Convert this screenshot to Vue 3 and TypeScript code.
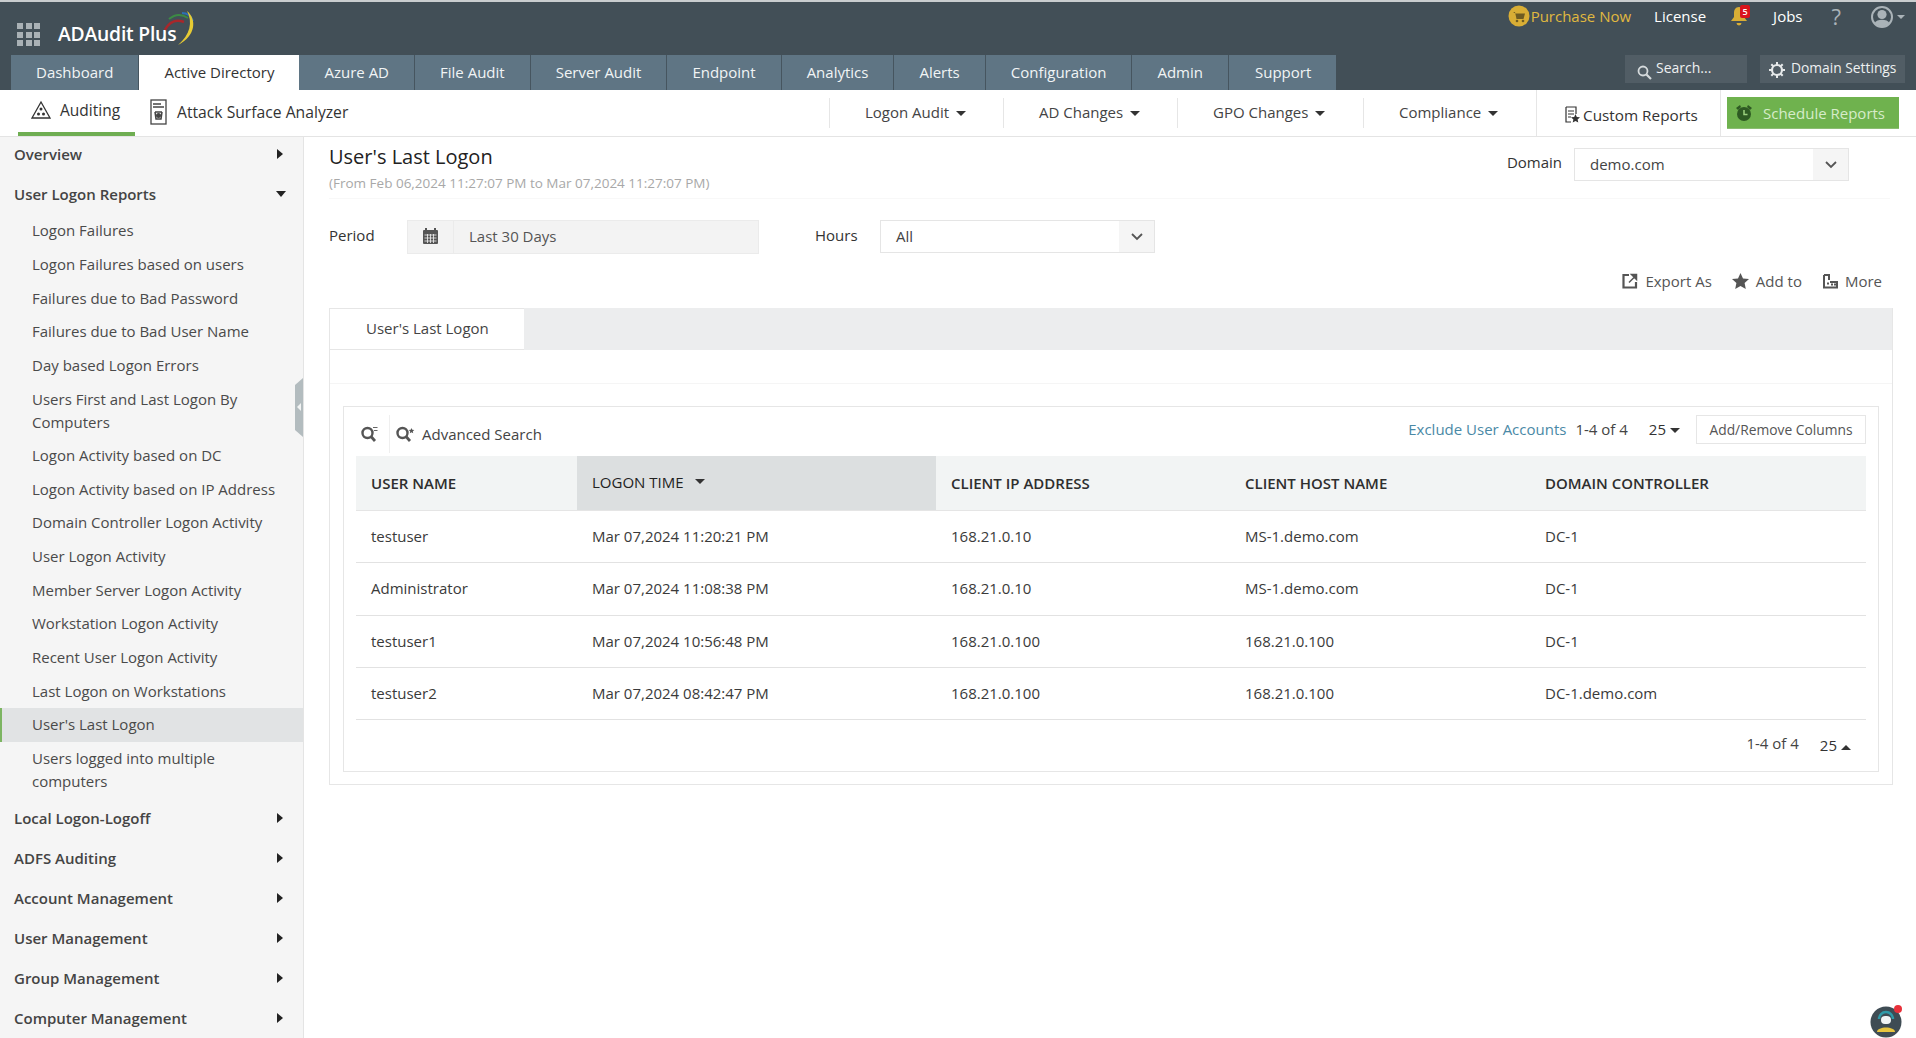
<script setup lang="ts">
interface NavItem { label: string; kind: 'head' | 'sub'; open?: boolean; active?: boolean }
const tabs: string[] = ['Dashboard', 'Active Directory', 'Azure AD', 'File Audit', 'Server Audit', 'Endpoint', 'Analytics', 'Alerts', 'Configuration', 'Admin', 'Support']
const menus: string[] = ['Logon Audit', 'AD Changes', 'GPO Changes', 'Compliance']
const nav: NavItem[] = [
  { label: 'Overview', kind: 'head' },
  { label: 'User Logon Reports', kind: 'head', open: true },
  { label: 'Logon Failures', kind: 'sub' },
  { label: 'Logon Failures based on users', kind: 'sub' },
  { label: 'Failures due to Bad Password', kind: 'sub' },
  { label: 'Failures due to Bad User Name', kind: 'sub' },
  { label: 'Day based Logon Errors', kind: 'sub' },
  { label: 'Users First and Last Logon By Computers', kind: 'sub' },
  { label: 'Logon Activity based on DC', kind: 'sub' },
  { label: 'Logon Activity based on IP Address', kind: 'sub' },
  { label: 'Domain Controller Logon Activity', kind: 'sub' },
  { label: 'User Logon Activity', kind: 'sub' },
  { label: 'Member Server Logon Activity', kind: 'sub' },
  { label: 'Workstation Logon Activity', kind: 'sub' },
  { label: 'Recent User Logon Activity', kind: 'sub' },
  { label: 'Last Logon on Workstations', kind: 'sub' },
  { label: "User's Last Logon", kind: 'sub', active: true },
  { label: 'Users logged into multiple computers', kind: 'sub' },
  { label: 'Local Logon-Logoff', kind: 'head' },
  { label: 'ADFS Auditing', kind: 'head' },
  { label: 'Account Management', kind: 'head' },
  { label: 'User Management', kind: 'head' },
  { label: 'Group Management', kind: 'head' },
  { label: 'Computer Management', kind: 'head' },
]
const rows: string[][] = [
  ['testuser', 'Mar 07,2024 11:20:21 PM', '168.21.0.10', 'MS-1.demo.com', 'DC-1'],
  ['Administrator', 'Mar 07,2024 11:08:38 PM', '168.21.0.10', 'MS-1.demo.com', 'DC-1'],
  ['testuser1', 'Mar 07,2024 10:56:48 PM', '168.21.0.100', '168.21.0.100', 'DC-1'],
  ['testuser2', 'Mar 07,2024 08:42:47 PM', '168.21.0.100', '168.21.0.100', 'DC-1.demo.com'],
]
</script>

<template>
  <div class="page">
    <header class="topbar">
      <div class="top-row">
        <div class="brand">
          <div class="apps"><i v-for="n in 9" :key="n"></i></div>
          <span class="logo-text">ADAudit Plus</span>
          <svg class="logo-arc" width="40" height="36" viewBox="0 0 40 36">
            <path d="M1 20 C5 12 12 9 20 12" fill="none" stroke="#a8272b" stroke-width="2.6" />
            <path d="M5 9 C11 4 18 4 24 8" fill="none" stroke="#3c8a44" stroke-width="2" />
            <path d="M18 3 C23 3 27 6 29 11" fill="none" stroke="#2c6fb5" stroke-width="2" />
            <path d="M23 1 C33 9 32 26 14 35 C26 25 29 12 23 1 Z" fill="#e6cb34" />
          </svg>
        </div>
        <div class="top-links">
          <span class="purchase">
            <svg width="22" height="22" viewBox="0 0 22 22"><circle cx="11" cy="11" r="10.5" fill="#d9ae35" /><path d="M5 7h2l1.5 7h7l1.5-5.5H7.5" fill="#6f5c22" /><circle cx="9" cy="16" r="1.3" fill="#6f5c22" /><circle cx="15" cy="16" r="1.3" fill="#6f5c22" /></svg>
            <span>Purchase Now</span>
          </span>
          <span class="link license">License</span>
          <span class="bell">
            <svg width="18" height="22" viewBox="0 0 18 22"><path d="M9 2c3.500 0 5 3 5 6v4l3 4H1l3-4V8c0-3 1.500-6 5-6z" fill="#d9ae35" /><path d="M6.500 18h5a2.500 2.500 0 0 1-5 0z" fill="#d9ae35" /></svg>
            <b class="badge">5</b>
          </span>
          <span class="link jobs">Jobs</span>
          <span class="help">?</span>
          <span class="user">
            <svg width="22" height="24" viewBox="0 0 22 24"><circle cx="11" cy="12" r="10" fill="#424f57" stroke="#aab3b8" stroke-width="2" /><circle cx="11" cy="9.500" r="4.600" fill="#aab3b8" /><path d="M3.500 18c2-4.500 13-4.500 15 0-3 4.500-12 4.500-15 0z" fill="#aab3b8" /></svg>
            <i class="caret-light"></i>
          </span>
        </div>
      </div>
      <div class="tab-row">
        <nav class="tabs">
          <span v-for="t in tabs" :key="t" class="tab" :class="{ on: t === 'Active Directory' }">{{ t }}</span>
        </nav>
        <div class="top-tools">
          <span class="tool search">
            <svg width="17" height="17" viewBox="0 0 17 17"><circle cx="7" cy="7" r="4.500" fill="none" stroke="#d5dadc" stroke-width="1.800" /><path d="M10.500 10.500l4.500 4.500" stroke="#d5dadc" stroke-width="2.200" /></svg>
            <span>Search...</span>
          </span>
          <span class="tool domain">
            <svg width="16" height="16" viewBox="0 0 16 16"><circle cx="8" cy="8" r="5" fill="none" stroke="#e6e9ea" stroke-width="2.200" /><path d="M8 0v3M8 13v3M0 8h3M13 8h3M2.300 2.300l2 2M11.700 11.700l2 2M2.300 13.700l2-2M11.700 4.300l2-2" stroke="#e6e9ea" stroke-width="2" /></svg>
            <span>Domain Settings</span>
          </span>
        </div>
      </div>
    </header>

    <div class="subbar">
      <div class="sub-left">
        <span class="sub-tab sel">
          <svg width="20" height="20" viewBox="0 0 20 20"><path d="M10 2L19 18H1z" fill="none" stroke="#333" stroke-width="1.300" /><circle cx="10" cy="9" r="1.500" fill="#333" /><circle cx="7.500" cy="14" r="1.500" fill="#333" /><circle cx="12.500" cy="14" r="1.500" fill="#333" /></svg>
          <span>Auditing</span>
        </span>
        <span class="sub-tab second">
          <svg width="17" height="26" viewBox="0 0 17 26"><rect x="1" y="1" width="15" height="24" fill="none" stroke="#444" stroke-width="1.300" /><path d="M3 5h8M3 8h11" stroke="#444" stroke-width="1.300" /><path d="M5 13h7M5 13l1 7h5l1-7" fill="none" stroke="#444" stroke-width="1.500" /><circle cx="8.500" cy="16.500" r="2.500" fill="#444" /></svg>
          <span>Attack Surface Analyzer</span>
        </span>
      </div>
      <div class="sub-right">
        <span v-for="m in menus" :key="m" class="menu" :class="{ wide: m === 'GPO Changes' }">{{ m }}<i class="caret"></i></span>
        <span class="custom">
          <svg width="15" height="18" viewBox="0 0 15 18"><path d="M1 1h10v7M1 1v15h5" fill="none" stroke="#333" stroke-width="1.200" /><path d="M3 5h6M3 8h6M3 11h3" stroke="#333" stroke-width="1.200" /><path d="M10.500 8l1.300 3 3.200.3-2.400 2.100.7 3.100-2.800-1.600-2.800 1.600.7-3.100L6 11.300l3.200-.3z" fill="#333" /></svg>
          <span>Custom Reports</span>
        </span>
        <span class="schedule">
          <svg width="20" height="20" viewBox="0 0 20 20"><circle cx="10" cy="11" r="7" fill="#2e5a23" /><path d="M2 5l4-3 1 2-3 3zM18 5l-4-3-1 2 3 3z" fill="#2e5a23" /><path d="M10 7v4.500h3.500" fill="none" stroke="#9cd07f" stroke-width="1.500" /></svg>
          <span>Schedule Reports</span>
        </span>
      </div>
    </div>

    <div class="body">
      <aside class="sidebar">
        <div v-for="n in nav" :key="n.label" class="nav" :class="[n.kind, { active: n.active }]">
          <span>{{ n.label }}</span>
          <i v-if="n.kind === 'head'" :class="n.open ? 'tri-down' : 'tri-right'"></i>
        </div>
        <div class="handle"></div>
      </aside>

      <main class="main">
        <div class="report-head">
          <div>
            <h1>User's Last Logon</h1>
            <p>(From Feb 06,2024 11:27:07 PM to Mar 07,2024 11:27:07 PM)</p>
          </div>
          <div class="filter domain-filter">
            <label>Domain</label>
            <div class="select domain-select">
              <span>demo.com</span>
              <span class="chev"><svg width="12" height="8" viewBox="0 0 12 8"><path d="M1 1l5 5 5-5" fill="none" stroke="#555" stroke-width="1.800" /></svg></span>
            </div>
          </div>
        </div>

        <div class="filters">
          <label class="period-label">Period</label>
          <div class="period">
            <span class="cal">
              <svg width="15" height="16" viewBox="0 0 15 16"><rect y="2" width="15" height="14" rx="1" fill="#555" /><path d="M3 0v3M12 0v3" stroke="#555" stroke-width="2" /><path d="M1.500 7h12M1.500 10h12M1.500 13h12M4.500 6v9M7.500 6v9M10.500 6v9" stroke="#f3f3f3" stroke-width="0.800" /></svg>
            </span>
            <span class="period-text">Last 30 Days</span>
          </div>
          <label class="hours-label">Hours</label>
          <div class="select hours-select">
            <span>All</span>
            <span class="chev"><svg width="12" height="8" viewBox="0 0 12 8"><path d="M1 1l5 5 5-5" fill="none" stroke="#555" stroke-width="1.800" /></svg></span>
          </div>
        </div>

        <div class="actions">
          <span class="action">
            <svg width="16" height="16" viewBox="0 0 16 16"><path d="M7 2H1.500v12.500H14V9" fill="none" stroke="#555" stroke-width="2.200" /><path d="M7 9.500L13 3.500M9.500 1.500h5v5z" fill="#555" stroke="#555" stroke-width="1.500" /></svg>
            <span>Export As</span>
          </span>
          <span class="action">
            <svg width="17" height="16" viewBox="0 0 17 16"><path d="M8.500 0l2.500 5.400 6 .7-4.400 4 1.200 5.900-5.300-3-5.300 3 1.200-5.900L.000 6.100l6-.7z" fill="#555" /></svg>
            <span>Add to</span>
          </span>
          <span class="action">
            <svg width="16" height="15" viewBox="0 0 16 15"><path d="M2 1h5v5M2 1v12.500h13V8H8" fill="none" stroke="#555" stroke-width="2" /><path d="M5 8.500h2v2H5zM9 9.500h2v2H9zM12 9.500h2v2h-2z" fill="#555" /></svg>
            <span>More</span>
          </span>
        </div>

        <section class="panel">
          <div class="strip"><span class="strip-tab">User's Last Logon</span></div>
          <div class="spacer"></div>
          <div class="card">
            <div class="toolbar">
              <div class="tool-left">
                <svg class="ico-search" width="18" height="18" viewBox="0 0 18 18"><circle cx="7.500" cy="8" r="5" fill="none" stroke="#555" stroke-width="2.400" /><path d="M11 11.500l4 4.500" stroke="#555" stroke-width="2.800" /><path d="M13 2.500h4.500M14 5.500h3.500" stroke="#666" stroke-width="1.100" /></svg>
                <span class="tool-sep"></span>
                <svg width="20" height="18" viewBox="0 0 20 18"><circle cx="7.500" cy="8" r="5" fill="none" stroke="#555" stroke-width="2.400" /><path d="M11 11.500l4 4.500" stroke="#555" stroke-width="2.800" /><path d="M16.500 3l.8 1.800 2 .2-1.500 1.300.4 2-1.700-1-1.700 1 .4-2L13.700 5l2-.2z" fill="#555" /></svg>
                <span class="adv">Advanced Search</span>
              </div>
              <div class="tool-right">
                <a class="exclude">Exclude User Accounts</a>
                <span class="count">1-4 of 4</span>
                <span class="per">25<i class="caret small"></i></span>
                <span class="columns">Add/Remove Columns</span>
              </div>
            </div>
            <div class="grid head">
              <div class="hc">USER NAME</div>
              <div class="hc sorted">LOGON TIME<i class="caret sort"></i></div>
              <div class="hc">CLIENT IP ADDRESS</div>
              <div class="hc">CLIENT HOST NAME</div>
              <div class="hc">DOMAIN CONTROLLER</div>
            </div>
            <div v-for="r in rows" :key="r[0]" class="grid row">
              <div v-for="(c, i) in r" :key="i" class="td">{{ c }}</div>
            </div>
            <div class="foot">
              <span class="count">1-4 of 4</span>
              <span class="per foot-per">25<i class="caret up"></i></span>
            </div>
          </div>
        </section>
      </main>
    </div>

    <div class="bot">
      <svg width="34" height="34" viewBox="0 0 34 34"><circle cx="16" cy="18" r="15.500" fill="#3f4c54" /><path d="M9 15a7 7 0 0 1 14 0" fill="none" stroke="#2f9aa8" stroke-width="2.500" /><rect x="11" y="12" width="10" height="8" rx="4" fill="#f2f5f5" /><path d="M7 28c0-6 18-6 18 0z" fill="#e8c53f" /><circle cx="28" cy="5" r="4" fill="#e8313a" /></svg>
    </div>
  </div>
</template>

<style>
html, body { margin: 0; background: #fff; }
</style>

<style scoped>
.page { width: 1916px; height: 1038px; overflow: hidden; position: relative; font-family: "Open Sans", "Noto Sans", sans-serif; font-size: 15px; color: #333; background: #fff; }
.topbar { height: 88px; padding-top: 2px; background: #424f57; box-shadow: inset 0 2px 0 #c9cdcf; }
.top-row { height: 53px; display: flex; justify-content: space-between; }
.brand { display: flex; position: relative; padding-left: 17px; }
.apps { width: 23px; height: 23px; margin-top: 21px; display: grid; grid-template-columns: repeat(3, 6px); grid-auto-rows: 6px; gap: 2.500px; }
.apps i { background: #a9b1b5; }
.logo-text { color: #fff; font-size: 19.300px; font-weight: 600; margin: 18px 0 0 18px; letter-spacing: -0.200px; line-height: 28px; }
.logo-arc { margin: 8px 0 0 -12px; }
.top-links { display: flex; align-items: flex-start; padding-top: 3px; color: #fff; height: 24px; }
.purchase { display: flex; align-items: center; color: #e0b93f; margin-right: 23px; line-height: 22px; }
.purchase svg { margin-right: 1px; }
.link { line-height: 22px; }
.license { margin-right: 24px; }
.bell { position: relative; width: 18px; height: 22px; margin-right: 25px; }
.badge { position: absolute; left: 10px; top: 0; width: 10px; height: 13px; background: #d9141c; color: #fff; font-size: 9px; line-height: 13px; text-align: center; border-radius: 2px; font-weight: 600; }
.jobs { margin-right: 29px; }
.help { color: #aab3b8; font-size: 22px; line-height: 22px; margin-right: 30px; }
.user { display: flex; align-items: center; height: 24px; padding-right: 11px; }
.caret-light { width: 0; height: 0; margin-left: 4px; border: 4.500px solid transparent; border-top-color: #aab3b8; border-bottom: 0; }
.tab-row { display: flex; justify-content: space-between; height: 35px; padding: 0 11px; }
.tabs { display: flex; }
.tab { padding: 0 25px; line-height: 35px; background: #5f7584; color: #f1f4f5; border-right: 1px solid #46555f; white-space: nowrap; }
.tab:last-child { border-right: 0; padding-left: 26px; }
.tab.on { background: #fff; color: #333; border-right: 0; }
.top-tools { display: flex; gap: 13px; font-size: 14px; color: #eef0f1; }
.tool { height: 28px; background: #515d65; display: flex; align-items: center; }
.search { width: 122px; padding-left: 11px; box-sizing: border-box; gap: 3px; }
.search svg { margin-top: 6px; }
.search span { margin-top: -3px; }
.domain { width: 145px; padding-left: 9px; box-sizing: border-box; gap: 6px; white-space: nowrap; font-size: 13.800px; }
.domain span { margin-top: -3px; }
.domain svg { margin-top: 2px; }
.subbar { height: 46px; border-bottom: 1px solid #e4e4e4; display: flex; justify-content: space-between; }
.sub-left { display: flex; height: 46px; padding-left: 18px; font-size: 15.500px; }
.sub-tab { display: flex; align-items: center; }
.sel { width: 117px; padding-left: 13px; box-sizing: border-box; gap: 9px; border-bottom: 4px solid #6fae52; height: 46px; padding-bottom: 3px; }
.sel span { font-weight: 500; }
.second { margin-left: 15px; gap: 10px; font-weight: 500; height: 46px; padding-bottom: 3px; box-sizing: border-box; font-size: 15.700px; }
.sub-right { display: flex; align-items: center; height: 46px; padding-right: 17px; }
.menu { width: 174px; height: 30px; box-sizing: border-box; padding-left: 35px; line-height: 28px; border-left: 1px solid #e6e6e6; color: #444; white-space: nowrap; }
.menu.wide { width: 186px; }
.menu:nth-child(4) { width: 173px; }
.caret { display: inline-block; vertical-align: middle; width: 0; height: 0; margin-left: 7px; border: 5px solid transparent; border-top-color: #333; border-bottom: 0; }
.custom { width: 185px; height: 46px; box-sizing: border-box; padding-left: 28px; display: flex; align-items: center; gap: 3px; border-left: 1px solid #e6e6e6; border-right: 1px solid #e6e6e6; font-weight: 500; color: #333; white-space: nowrap; font-size: 15.300px; }
.custom > span { margin-top: 4px; }
.custom svg { margin-top: 4px; }
.schedule { margin-left: 6px; width: 172px; height: 32px; box-sizing: border-box; padding-left: 7px; background: #6fb24e; color: #d6ecc9; display: flex; align-items: center; gap: 9px; border-bottom: 1px solid #8bbd72; white-space: nowrap; }
.body { display: flex; height: 901px; }
.sidebar { position: relative; flex: none; width: 304px; box-sizing: border-box; background: #f5f5f5; border-right: 1px solid #e4e4e4; }
.nav { display: flex; justify-content: space-between; align-items: center; box-sizing: border-box; }
.nav:first-child { margin-top: -3px; }
.head { height: 40px; padding: 0 20px 0 14px; font-weight: 600; color: #444; }
.sub { min-height: 33.650px; padding: 5.320px 10px 5.320px 32px; line-height: 23px; color: #4a4a4a; }
.nav.active { background: #e1e3e4; border-left: 2px solid #7db562; padding-left: 30px; }
.tri-right { width: 0; height: 0; border: 5.500px solid transparent; border-left: 6px solid #222; border-right: 0; }
.tri-down { width: 0; height: 0; border: 5.500px solid transparent; border-top: 6px solid #222; border-bottom: 0; margin-right: -3px; }
.handle { position: absolute; left: 295px; top: 241px; width: 8px; height: 59px; background: #b3bcbf; clip-path: polygon(100% 0, 100% 100%, 0 88%, 0 12%); }
.handle::after { content: ""; position: absolute; left: 2px; top: 25px; border: 4px solid transparent; border-right: 4px solid #f2f4f4; border-left: 0; }
.main { flex: 1; min-width: 0; padding-left: 25px; }
.report-head { display: flex; justify-content: space-between; height: 62px; box-sizing: border-box; padding: 10px 41px 0 0; margin-right: 26px; border-bottom: 1px solid #f8f8f8; }
h1 { margin: 0; font-size: 20px; font-weight: 500; line-height: 20px; color: #222; }
.report-head p { margin: 6px 0 0; font-size: 13.500px; line-height: 20px; color: #a8a8a8; white-space: nowrap; }
.filter { display: flex; align-items: flex-start; padding-top: 1px; }
.filter label { margin-right: 12px; line-height: 28px; color: #333; }
.select { display: flex; justify-content: space-between; box-sizing: border-box; border: 1px solid #e5e5e5; height: 33px; line-height: 31px; color: #444; padding-left: 15px; }
.domain-select { width: 275px; }
.hours-select { width: 275px; }
.chev { width: 35px; background: #f5f5f5; display: flex; align-items: center; justify-content: center; }
.filters { display: flex; margin-top: 21px; height: 34px; }
.period-label { width: 78px; line-height: 30px; }
.period { width: 352px; height: 34px; box-sizing: border-box; background: #f3f3f3; border: 1px solid #ebebeb; display: flex; }
.cal { width: 45px; display: flex; justify-content: center; align-items: center; border-right: 1px solid #ebebeb; padding-bottom: 3px; }
.period-text { padding-left: 15px; line-height: 31px; color: #555; }
.hours-label { margin-left: 56px; width: 65px; line-height: 30px; }
.actions { display: flex; justify-content: flex-end; gap: 20px; height: 54px; box-sizing: border-box; padding: 16px 34px 0 0; color: #555; }
.action { display: flex; align-items: center; gap: 7px; height: 22px; }
.panel { margin-right: 23px; height: 477px; box-sizing: border-box; border: 1px solid #e6e6e6; border-top: 0; }
.strip { height: 42px; background: #ecedee; }
.strip-tab { display: inline-block; width: 194px; height: 42px; box-sizing: border-box; background: #fff; padding-left: 36px; line-height: 40px; color: #444; box-shadow: inset 0 1px 0 #e6e6e6, inset 0 -1px 0 #e6e6e6; }
.spacer { height: 33px; border-bottom: 1px solid #f5f5f5; }
.card { margin: 22px 13px 0; height: 366px; box-sizing: border-box; border: 1px solid #e6e6e6; padding: 0 12px; }
.toolbar { height: 49px; display: flex; justify-content: space-between; }
.tool-left { display: flex; align-items: center; padding-left: 4px; height: 46px; margin-top: 4px; }
.tool-sep { width: 1px; height: 38px; background: #efefef; margin: 0 5px 0 11px; }
.adv { margin-left: 7px; color: #444; }
.tool-right { display: flex; align-items: flex-start; padding-top: 8px; white-space: nowrap; }
.exclude { color: #4a89a6; line-height: 29px; margin-right: 9px; }
.count { color: #444; line-height: 29px; }
.per { margin-left: 21px; line-height: 29px; }
.small { margin-left: 4px; border-width: 5px; border-bottom: 0; }
.columns { margin-left: 16px; width: 170px; height: 29px; box-sizing: border-box; border: 1px solid #e6e6e6; text-align: center; font-size: 13.800px; line-height: 27px; color: #555; }
.grid { display: grid; grid-template-columns: 221px 359px 294px 300px 336px; }
.head.grid { height: 55px; background: #f2f4f4; border-bottom: 1px solid #e5e5e5; box-sizing: border-box; padding: 0 0 1px; font-weight: 600; }
.hc { display: flex; align-items: center; padding-left: 15px; color: #2e2e2e; white-space: nowrap; }
.sorted { background: #dcdfe0; padding-bottom: 3px; font-weight: 500; color: #222; margin-bottom: -1px; }
.sort { margin-left: 11px; }
.row { height: 52.300px; border-bottom: 1px solid #e2e2e2; box-sizing: border-box; }
.td { padding-left: 15px; line-height: 50px; color: #3a3a3a; }
.foot { display: flex; justify-content: flex-end; padding: 9px 15px 0 0; }
.foot-per { margin-left: 21px; padding-top: 2px; }
.up { margin-left: 4px; border-width: 5px; border-top: 0; border-bottom: 5px solid #333; }
.bot { position: absolute; left: 1870px; top: 1004px; width: 34px; height: 34px; }
</style>
